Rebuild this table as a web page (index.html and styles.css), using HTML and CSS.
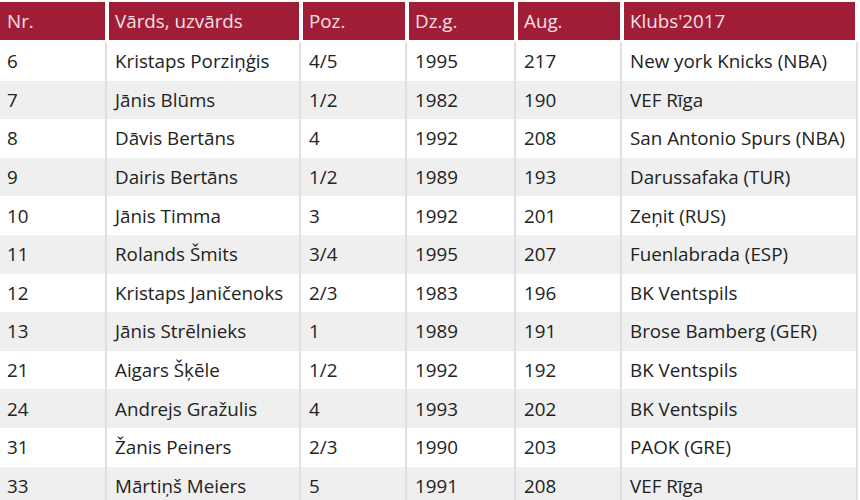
FILE: index.html
```html
<!DOCTYPE html>
<html lang="lv">
<head>
<meta charset="utf-8">
<link rel="stylesheet" href="styles.css">
</head>
<body>
<div class="table">
  <div class="row head">
    <div class="c">Nr.</div><div class="c">Vārds, uzvārds</div><div class="c">Poz.</div><div class="c">Dz.g.</div><div class="c">Aug.</div><div class="c">Klubs'2017</div>
  </div>
  <div class="row"><div class="c">6</div><div class="c">Kristaps Porziņģis</div><div class="c">4/5</div><div class="c">1995</div><div class="c">217</div><div class="c">New york Knicks (NBA)</div></div>
  <div class="row alt"><div class="c">7</div><div class="c">Jānis Blūms</div><div class="c">1/2</div><div class="c">1982</div><div class="c">190</div><div class="c">VEF Rīga</div></div>
  <div class="row"><div class="c">8</div><div class="c">Dāvis Bertāns</div><div class="c">4</div><div class="c">1992</div><div class="c">208</div><div class="c">San Antonio Spurs (NBA)</div></div>
  <div class="row alt"><div class="c">9</div><div class="c">Dairis Bertāns</div><div class="c">1/2</div><div class="c">1989</div><div class="c">193</div><div class="c">Darussafaka (TUR)</div></div>
  <div class="row"><div class="c">10</div><div class="c">Jānis Timma</div><div class="c">3</div><div class="c">1992</div><div class="c">201</div><div class="c">Zeņit (RUS)</div></div>
  <div class="row alt"><div class="c">11</div><div class="c">Rolands Šmits</div><div class="c">3/4</div><div class="c">1995</div><div class="c">207</div><div class="c">Fuenlabrada (ESP)</div></div>
  <div class="row"><div class="c">12</div><div class="c">Kristaps Janičenoks</div><div class="c">2/3</div><div class="c">1983</div><div class="c">196</div><div class="c">BK Ventspils</div></div>
  <div class="row alt"><div class="c">13</div><div class="c">Jānis Strēlnieks</div><div class="c">1</div><div class="c">1989</div><div class="c">191</div><div class="c">Brose Bamberg (GER)</div></div>
  <div class="row"><div class="c">21</div><div class="c">Aigars Šķēle</div><div class="c">1/2</div><div class="c">1992</div><div class="c">192</div><div class="c">BK Ventspils</div></div>
  <div class="row alt"><div class="c">24</div><div class="c">Andrejs Gražulis</div><div class="c">4</div><div class="c">1993</div><div class="c">202</div><div class="c">BK Ventspils</div></div>
  <div class="row"><div class="c">31</div><div class="c">Žanis Peiners</div><div class="c">2/3</div><div class="c">1990</div><div class="c">203</div><div class="c">PAOK (GRE)</div></div>
  <div class="row alt"><div class="c">33</div><div class="c">Mārtiņš Meiers</div><div class="c">5</div><div class="c">1991</div><div class="c">208</div><div class="c">VEF Rīga</div></div>
</div>
</body>
</html>
```
FILE: styles.css
```css
html, body {
  margin: 0;
  padding: 0;
  background: #ffffff;
}
body {
  font-family: "Open Sans", Lato, "DejaVu Sans", sans-serif;
  font-size: 18.8px;
  font-weight: 500;
  color: #222222;
  overflow: hidden;
}
.table {
  width: 858px;
  padding-top: 2px;
}
.row {
  display: grid;
  grid-template-columns: 105px 194px 106px 109px 106px 235px;
  height: 38.6px;
  background: #ffffff;
  border-right: 2px solid #e0e0e0;
}
.row.alt {
  background: #efefef;
}
.c {
  display: flex;
  align-items: center;
  padding-left: 7px;
  white-space: nowrap;
  box-sizing: border-box;
}
.c + .c {
  border-left: 2px solid #e0e0e0;
  padding-left: 8px;
}
.row.head {
  height: 38px;
  margin-bottom: 2px;
  border-right: 2px solid #ffffff;
  background: #ffffff;
}
.head .c {
  background: #a01d37;
  color: #f6e0e4;
  font-size: 18.8px;
}
.head .c + .c {
  border-left: 4px solid #ffffff;
  padding-left: 6px;
}
```
